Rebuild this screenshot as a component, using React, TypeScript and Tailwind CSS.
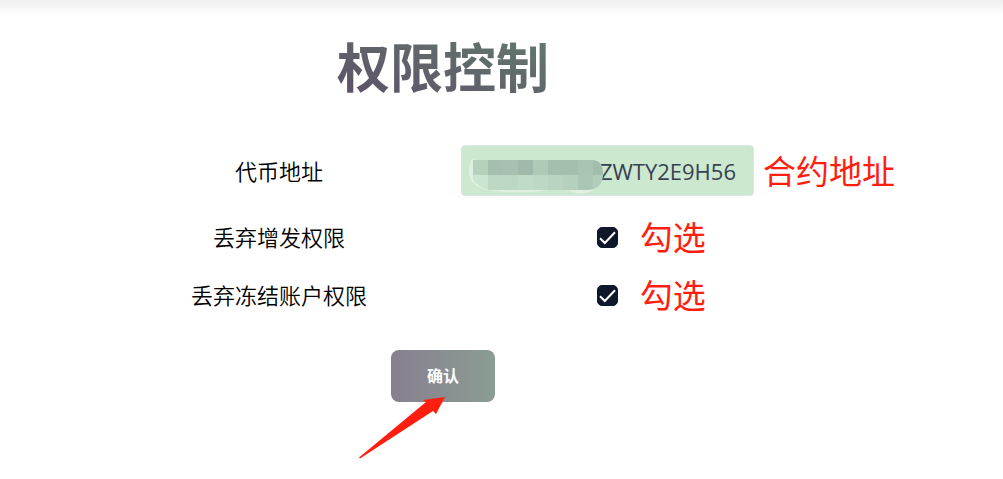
import type { ReactNode } from 'react';

const cjk = "font-['Open_Sans','Noto_Sans_CJK_SC',sans-serif]";

const upper = ['#b5d0bb', '#a4bfae', '#a7c0b1', '#9fb9aa', '#b0cab8', '#a5bfaf', '#a5bfaf', '#a9c4b3', '#a3bdad'];
const lower = ['#cae6cf', '#bcd8c3', '#bcd8c3', '#c0dbc6', '#bdd9c4', '#b9d4c0', '#b5d0bc', '#abc6b4', '#b2cdba'];

function Mosaic() {
  return (
    <svg
      className="pointer-events-none absolute top-3 left-[7px]"
      width="136"
      height="38"
      viewBox="0 0 136 38"
      aria-hidden="true"
    >
      <defs>
        <clipPath id="brush">
          <path d="M5 3H124Q135 3 135 17Q135 33 118 33H20Q10 30 5 22Z" />
        </clipPath>
      </defs>
      <path d="M4 2Q0 8 1 17Q4 32 26 34Q52 37 82 33H100Q112 40 126 33Z" fill="#dff0e1" />
      <path d="M5 3H30V33Q9 31 5 22Z" fill="#cae6cf" />
      <g clipPath="url(#brush)">
        {upper.map((fill, i) => (
          <rect key={i} x={5 + i * 15} y="3" width="15" height="15" fill={fill} />
        ))}
        {lower.map((fill, i) => (
          <rect key={i} x={5 + i * 15} y="18" width="15" height="15" fill={fill} />
        ))}
      </g>
    </svg>
  );
}

function Note({ className, children }: { className: string; children: ReactNode }) {
  return (
    <span className={`absolute top-1/2 -mt-5 text-[33px] leading-[42px] font-normal whitespace-nowrap text-[#ff1e10] ${cjk} ${className}`}>
      {children}
    </span>
  );
}

function CheckRow({ id, label }: { id: string; label: string }) {
  return (
    <div className="grid h-[58px] grid-cols-2 items-center">
      <label htmlFor={id} className="text-center text-[22px] leading-8 font-[350]">
        {label}
      </label>
      <div className="relative flex justify-center">
        <span className="relative grid size-[21px]">
          <input
            id={id}
            type="checkbox"
            defaultChecked
            className="peer size-[21px] appearance-none rounded-[5px] border border-[#0f172a] bg-white checked:bg-[#0f172a]"
          />
          <svg
            className="pointer-events-none absolute inset-0 hidden peer-checked:block"
            viewBox="0 0 21 21"
            fill="none"
            stroke="#fff"
            strokeWidth="2"
            aria-hidden="true"
          >
            <path d="M3 11.2 7.8 16 18 5.2" />
          </svg>
        </span>
        <Note className="left-[60%]">勾选</Note>
      </div>
    </div>
  );
}

export default function App() {
  return (
    <div className={`min-h-screen bg-white text-black ${cjk}`}>
      <div className="h-4 bg-linear-to-b from-[#f0f0f0] to-white" />
      <main className="pr-[117px]">
        <form className="mx-auto max-w-[656px]" onSubmit={(e) => e.preventDefault()}>
          <h1 className="pt-4 pb-[41px] text-center text-[53px] leading-[72px] font-bold">
            <span className="bg-linear-to-tr from-[#5c4d66] to-[#637c6e] bg-clip-text text-transparent">权限控制</span>
          </h1>
          <div className="grid grid-cols-2 items-center">
            <label htmlFor="token" className="text-center text-[22px] leading-8 font-[350]">
              代币地址
            </label>
            <div className="relative mr-[17px] ml-[18px]">
              <input
                id="token"
                type="text"
                defaultValue="ZWTY2E9H56"
                className="block h-[51px] w-full rounded-[4px] border border-[#dbe5ea] bg-[#cce8cf] pr-[17px] pl-4 text-right font-['Open_Sans',sans-serif] text-[22px] text-[#374151] outline-none"
              />
              <Mosaic />
              <Note className="left-full ml-[9px]">合约地址</Note>
            </div>
          </div>
          <div className="pt-3">
            <CheckRow id="mint" label="丢弃增发权限" />
            <CheckRow id="freeze" label="丢弃冻结账户权限" />
          </div>
          <div className="flex justify-center pt-[26px]">
            <div className="relative">
              <button
                type="submit"
                className="block h-[52px] w-[104px] rounded-lg bg-linear-to-r from-[#877f8f] to-[#8a9d93] text-base font-bold text-white"
              >
                确认
              </button>
              <svg
                className="pointer-events-none absolute top-[47px] right-[50px]"
                width="86"
                height="62"
                viewBox="0 0 86 62"
                aria-hidden="true"
              >
                <path d="M0 60.5 67 5 64 3 86 0 77 17 74 14 1 61.5Z" fill="#ff1e10" />
              </svg>
            </div>
          </div>
        </form>
      </main>
    </div>
  );
}
